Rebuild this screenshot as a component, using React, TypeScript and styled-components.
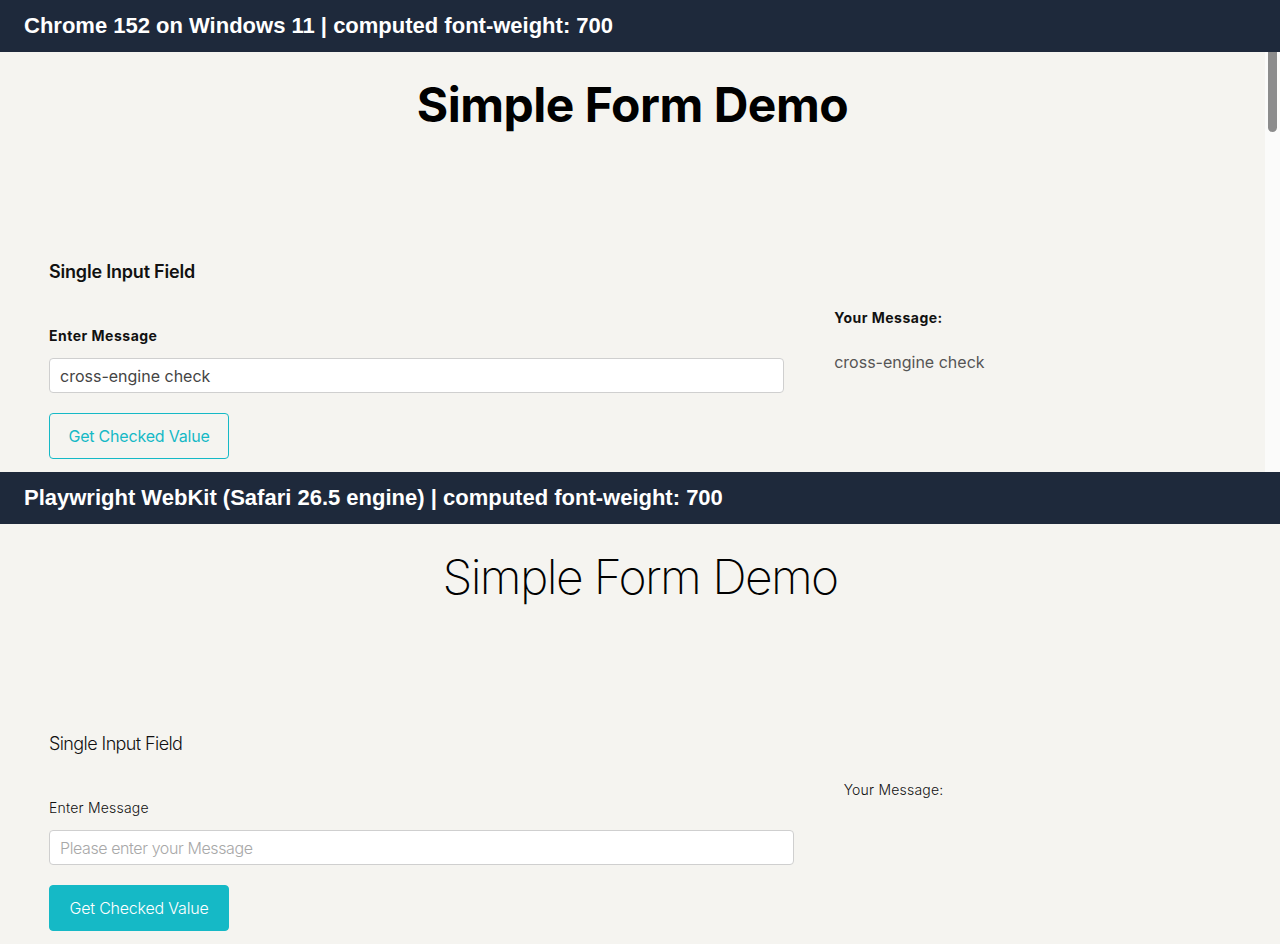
import React from "react";
import styled, { createGlobalStyle, css } from "styled-components";

const Global = createGlobalStyle`
  html, body { margin: 0; padding: 0; }
  body { width: 1280px; height: 944px; overflow: hidden; background: #f5f4f0; }
  * { box-sizing: border-box; }
`;

type Variant = "bold" | "thin";

const FONT = `"Inter", "Noto Sans", sans-serif`;
const TEAL = "#15b9c6";

const Page = styled.div`
  display: flex;
  flex-direction: column;
  width: 1280px;
  height: 944px;
`;

const Bar = styled.div`
  height: 52px;
  background: #1e293b;
  color: #ffffff;
  font-family: "Liberation Sans", Arial, sans-serif;
  font-weight: 700;
  font-size: 22px;
  display: flex;
  align-items: center;
  padding-left: 24px;
`;

const Viewport = styled.div`
  height: 420px;
  display: flex;
  overflow: hidden;
  background: #f5f4f0;
`;

const Frame = styled.div`
  flex: 1;
  padding: 24px 49px 0;
  font-family: ${FONT};
  color: #000;
`;

const Track = styled.div`
  width: 15px;
  background: #fbfbfa;
  display: flex;
  justify-content: center;
`;

const Thumb = styled.div`
  width: 9px;
  height: 80px;
  background: #8c8c8c;
  border-radius: 0 0 5px 5px;
`;

const Title = styled.h1<{ $v: Variant }>`
  margin: 0;
  text-align: center;
  font-size: 48px;
  line-height: 58px;
  letter-spacing: ${(p) => (p.$v === "bold" ? "-0.5px" : "-1.6px")};
  font-weight: ${(p) => (p.$v === "bold" ? 700 : 200)};
`;

const Section = styled.h2<{ $v: Variant }>`
  margin: 126px 0 0;
  font-size: 18px;
  line-height: 24px;
  letter-spacing: ${(p) => (p.$v === "bold" ? "-0.2px" : "-0.6px")};
  font-weight: ${(p) => (p.$v === "bold" ? 600 : 300)};
  color: #111;
`;

const Row = styled.div`
  display: grid;
  grid-template-columns: 63% 1fr;
  column-gap: 50px;
  margin-top: 24px;
  align-items: start;
`;

const LeftCol = styled.div`
  display: flex;
  flex-direction: column;
  align-items: flex-start;
  padding-top: 18px;
`;

const RightCol = styled.div`
  display: flex;
  flex-direction: column;
`;

const Label = styled.label<{ $v: Variant }>`
  font-size: 14px;
  line-height: 20px;
  letter-spacing: ${(p) => (p.$v === "bold" ? "0.5px" : "0.2px")};
  font-weight: ${(p) => (p.$v === "bold" ? 700 : 300)};
  color: #111;
`;

const Input = styled.input<{ $v: Variant }>`
  margin-top: 12px;
  width: 100%;
  height: 35px;
  border: 1px solid #cfcfcf;
  border-radius: 4px;
  background: #ffffff;
  padding: 0 10px;
  font-family: ${FONT};
  font-size: 16px;
  font-weight: ${(p) => (p.$v === "bold" ? 400 : 300)};
  color: #444;
  outline: none;
  &::placeholder {
    color: #a8a8a8;
    font-weight: 300;
    letter-spacing: -0.4px;
  }
`;

const Button = styled.button<{ $v: Variant }>`
  margin-top: 20px;
  width: 180px;
  height: 46px;
  border-radius: 4px;
  border: 1px solid ${TEAL};
  font-family: ${FONT};
  font-size: 16px;
  letter-spacing: -0.2px;
  cursor: pointer;
  ${(p) =>
    p.$v === "bold"
      ? css`
          background: transparent;
          color: ${TEAL};
          font-weight: 400;
        `
      : css`
          background: ${TEAL};
          color: #ffffff;
          font-weight: 300;
        `}
`;

const Output = styled.div<{ $v: Variant }>`
  margin-top: 22px;
  min-height: 24px;
  font-size: 16px;
  line-height: 24px;
  color: #555;
  font-weight: ${(p) => (p.$v === "bold" ? 400 : 300)};
`;

function Demo({ v, value, scroll }: { v: Variant; value: string; scroll?: boolean }) {
  return (
    <Viewport>
      <Frame>
        <Title $v={v}>Simple Form Demo</Title>
        <Section $v={v}>Single Input Field</Section>
        <Row>
          <LeftCol>
            <Label $v={v}>Enter Message</Label>
            <Input
              $v={v}
              type="text"
              placeholder="Please enter your Message"
              defaultValue={value}
            />
            <Button $v={v}>Get Checked Value</Button>
          </LeftCol>
          <RightCol>
            <Label $v={v}>Your Message:</Label>
            <Output $v={v}>{value}</Output>
          </RightCol>
        </Row>
      </Frame>
      {scroll && (
        <Track>
          <Thumb />
        </Track>
      )}
    </Viewport>
  );
}

export default function App() {
  return (
    <Page>
      <Global />
      <Bar>Chrome 152 on Windows 11 | computed font-weight: 700</Bar>
      <Demo v="bold" value="cross-engine check" scroll />
      <Bar>Playwright WebKit (Safari 26.5 engine) | computed font-weight: 700</Bar>
      <Demo v="thin" value="" />
    </Page>
  );
}
